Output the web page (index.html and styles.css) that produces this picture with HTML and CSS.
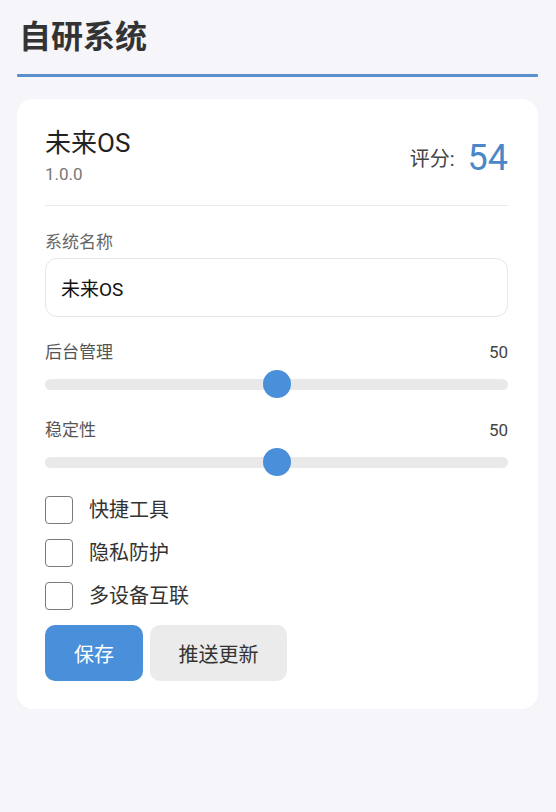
FILE: index.html
```html
<!DOCTYPE html>
<html lang="zh-CN">
<head>
<meta charset="utf-8">
<title>自研系统</title>
<link rel="stylesheet" href="styles.css">
</head>
<body>
<main class="page">
  <h1 class="page-title">自研系统</h1>
  <div class="title-rule"></div>

  <section class="card">
    <header class="card-head">
      <div class="sys-id">
        <div class="sys-name">未来OS</div>
        <div class="sys-ver">1.0.0</div>
      </div>
      <div class="score">
        <span class="score-label">评分:</span>
        <span class="score-value">54</span>
      </div>
    </header>

    <div class="divider"></div>

    <label class="field-label" for="name">系统名称</label>
    <input class="text-input" id="name" type="text" value="未来OS">

    <div class="slider-row">
      <span class="slider-label">后台管理</span>
      <span class="slider-value">50</span>
    </div>
    <input class="range" type="range" min="0" max="100" value="50">

    <div class="slider-row second">
      <span class="slider-label">稳定性</span>
      <span class="slider-value">50</span>
    </div>
    <input class="range" type="range" min="0" max="100" value="50">

    <div class="checks">
      <label class="check"><input type="checkbox"><span>快捷工具</span></label>
      <label class="check"><input type="checkbox"><span>隐私防护</span></label>
      <label class="check"><input type="checkbox"><span>多设备互联</span></label>
    </div>

    <div class="actions">
      <button class="btn btn-primary" type="button">保存</button>
      <button class="btn btn-secondary" type="button">推送更新</button>
    </div>
  </section>
</main>
</body>
</html>
```
FILE: styles.css
```css
* { box-sizing: border-box; }

html, body {
  margin: 0;
  padding: 0;
  background: #f5f5fa;
}

body {
  font-family: Roboto, "Noto Sans CJK SC", "Noto Sans", sans-serif;
  color: #333;
}

.page {
  padding: 17px 18px 0 17px;
}

.page-title {
  margin: 0;
  padding-left: 2px;
  font-size: 32px;
  line-height: 40px;
  font-weight: 700;
  color: #333;
}

.title-rule {
  height: 3px;
  background: #5a8fcc;
  margin-top: 17px;
  border-radius: 1px;
}

.card {
  margin-top: 22px;
  background: #fff;
  border-radius: 16px;
  padding: 28px 30px 28px 28px;
  display: flex;
  flex-direction: column;
  box-shadow: 0 1px 3px rgba(0, 0, 0, 0.02);
}

.card-head {
  display: flex;
  justify-content: space-between;
  align-items: center;
}

.sys-name {
  font-size: 26px;
  line-height: 32px;
  color: #222;
}

.sys-ver {
  font-size: 17px;
  line-height: 24px;
  color: #777;
  margin-top: 3px;
}

.score {
  display: flex;
  align-items: center;
  gap: 13px;
  margin-top: 2px;
}

.score-label {
  font-size: 20px;
  color: #444;
}

.score-value {
  font-size: 36px;
  line-height: 40px;
  color: #4a86c8;
}

.divider {
  height: 1px;
  background: #e9e9e9;
  margin-top: 19px;
}

.field-label {
  margin-top: 25px;
  font-size: 17px;
  line-height: 22px;
  color: #666;
}

.text-input {
  margin-top: 5px;
  height: 59px;
  width: 100%;
  border: 1.5px solid #e6e6e6;
  border-radius: 12px;
  padding: 0 15px;
  font-family: inherit;
  font-size: 19px;
  color: #111;
  background: #fff;
  outline: none;
}

.slider-row {
  display: flex;
  justify-content: space-between;
  align-items: center;
  margin-top: 24px;
  font-size: 17px;
  line-height: 22px;
}

.slider-row.second { margin-top: 21px; }

.slider-label { color: #555; }
.slider-value { color: #444; }

.range {
  -webkit-appearance: none;
  appearance: none;
  width: 100%;
  height: 28px;
  margin: 7px 0 0;
  background: transparent;
  display: block;
}

.range::-webkit-slider-runnable-track {
  height: 11px;
  background: #e9e9e9;
  border-radius: 6px;
}

.range::-webkit-slider-thumb {
  -webkit-appearance: none;
  appearance: none;
  width: 28px;
  height: 28px;
  border-radius: 50%;
  background: #4a8fd9;
  margin-top: -9px;
  border: none;
}

.checks {
  display: flex;
  flex-direction: column;
  gap: 15px;
  margin-top: 20px;
}

.check {
  display: flex;
  align-items: center;
  gap: 16px;
  font-size: 20px;
  line-height: 28px;
  color: #333;
}

.check input {
  -webkit-appearance: none;
  appearance: none;
  margin: 0;
  width: 28px;
  height: 28px;
  border: 1.5px solid #7a7a7a;
  border-radius: 4px;
  background: #fff;
  flex: none;
}

.actions {
  display: flex;
  gap: 7px;
  margin-top: 15px;
}

.btn {
  height: 56px;
  border: none;
  border-radius: 10px;
  font-family: inherit;
  font-size: 20px;
  padding: 0;
}

.btn-primary {
  width: 98px;
  background: #4a8fd9;
  color: #fff;
}

.btn-secondary {
  width: 137px;
  background: #ebebeb;
  color: #333;
}
```
